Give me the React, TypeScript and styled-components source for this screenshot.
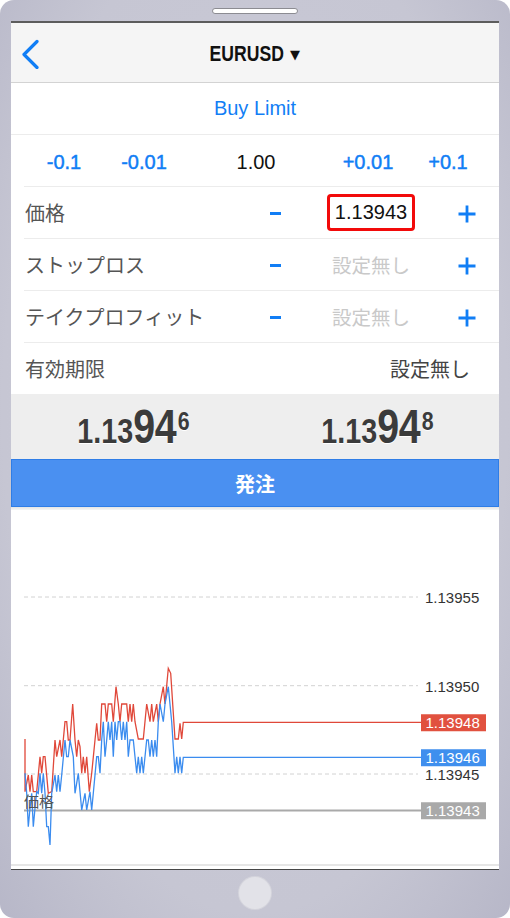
import styled, { createGlobalStyle } from "styled-components";

const BLUE = "#117ef5";
const SANS = `"Liberation Sans", "Noto Sans CJK JP", sans-serif`;

const GlobalStyle = createGlobalStyle`
  body {
    margin: 0;
    background: #ffffff;
    font-family: ${SANS};
  }
`;

// chart traces, read off the reference at 3x (x, y)
const redTrace: [number, number][] = [
  [75, 537], [75, 695], [85, 645], [90, 695], [95, 645], [100, 695], [110, 695],
  [120, 590], [125, 640], [130, 590], [135, 590], [145, 700], [155, 695],
  [165, 540], [170, 590], [180, 540], [185, 590], [195, 485], [200, 485],
  [205, 540], [210, 540], [218, 432], [225, 540], [230, 590], [235, 540],
  [240, 560], [245, 640], [250, 590], [255, 640], [260, 590], [268, 695],
  [275, 640], [285, 540], [290, 490], [295, 540], [300, 540], [305, 432],
  [315, 432], [320, 485], [325, 432], [335, 432], [340, 485], [348, 380],
  [355, 432], [360, 485], [365, 432], [380, 432], [385, 485], [390, 432],
  [395, 485], [400, 432], [405, 485], [415, 537], [430, 537], [440, 432],
  [450, 485], [455, 432], [460, 485], [470, 432], [475, 485], [480, 432],
  [490, 380], [495, 432], [505, 325], [512, 340], [525, 537], [535, 537],
  [540, 490], [545, 537], [550, 487], [1263, 487]
];

const blueTrace: [number, number][] = [
  [75, 640], [80, 700], [85, 800], [90, 745], [95, 700], [100, 800], [105, 745],
  [110, 695], [115, 700], [120, 640], [125, 700], [130, 640], [135, 700],
  [140, 800], [145, 800], [150, 855], [155, 700], [165, 645], [170, 695],
  [175, 645], [180, 695], [185, 645], [195, 540], [200, 590], [205, 590],
  [210, 540], [220, 590], [225, 700], [235, 640], [245, 750], [255, 700],
  [260, 750], [270, 695], [275, 750], [280, 700], [290, 590], [295, 590],
  [300, 640], [305, 540], [310, 485], [315, 590], [320, 540], [325, 485],
  [330, 540], [335, 485], [340, 590], [345, 485], [350, 540], [355, 485],
  [360, 485], [365, 540], [370, 485], [375, 540], [380, 485], [385, 590],
  [390, 540], [400, 540], [405, 590], [410, 640], [415, 590], [420, 640],
  [425, 590], [430, 640], [435, 590], [440, 540], [445, 540], [450, 590],
  [455, 540], [460, 590], [465, 540], [470, 590], [475, 485], [480, 432],
  [490, 485], [495, 432], [505, 380], [515, 485], [525, 640], [530, 590],
  [535, 640], [540, 590], [545, 640], [550, 592], [1263, 592]
];

const toPoints = (pts: [number, number][]) =>
  pts.map(([x, y]) => `${(x / 3 - 11).toFixed(1)},${(y / 3 + 50).toFixed(1)}`).join(" ");

const gridLevels = [
  { y: 87, label: "1.13955" },
  { y: 175.7, label: "1.13950" },
  { y: 264, label: "1.13945" }
];

const markers = [
  { y: 212.5, label: "1.13948", color: "#e1513f" },
  { y: 247.5, label: "1.13946", color: "#3f8fee" },
  { y: 300.5, label: "1.13943", color: "#a9a9a9" }
];

type Field = { label: string; value?: string };

const fields: Field[] = [
  { label: "価格", value: "1.13943" },
  { label: "ストップロス" },
  { label: "テイクプロフィット" }
];

const Quote = ({ head, big, tail }: { head: string; big: string; tail: string }) => (
  <QuoteCell>
    <QuoteText>
      <QuoteHead>{head}</QuoteHead>
      <QuoteBig>{big}</QuoteBig>
      <QuoteSup>{tail}</QuoteSup>
    </QuoteText>
  </QuoteCell>
);

export default function App() {
  return (
    <>
      <GlobalStyle />
      <Phone>
        <TopBezel>
          <Speaker />
        </TopBezel>
        <Screen>
          <NavBar>
            <BackButton>
              <svg width="20" height="30" viewBox="0 0 20 30">
                <polyline
                  points="16,2.5 3,15.5 16,28.5"
                  fill="none"
                  stroke={BLUE}
                  strokeWidth="3.2"
                  strokeLinecap="round"
                  strokeLinejoin="round"
                />
              </svg>
            </BackButton>
            <Title>
              <Symbol>EURUSD</Symbol>
              <Caret>▼</Caret>
            </Title>
            <span />
          </NavBar>

          <ModeRow>Buy Limit</ModeRow>

          <StepRow>
            <Step>-0.1</Step>
            <Step>-0.01</Step>
            <Step $plain>1.00</Step>
            <Step>+0.01</Step>
            <Step>+0.1</Step>
          </StepRow>

          {fields.map((f) => (
            <FieldRow key={f.label}>
              <FieldLabel>{f.label}</FieldLabel>
              <Minus />
              <ValueBox $active={!!f.value}>{f.value ?? "設定無し"}</ValueBox>
              <PlusIcon viewBox="0 0 20 20">
                <path d="M10 1.5V18.5M1.5 10H18.5" stroke={BLUE} strokeWidth="2.8" />
              </PlusIcon>
            </FieldRow>
          ))}

          <ExpiryRow>
            <FieldLabel>有効期限</FieldLabel>
            <ExpiryValue>設定無し</ExpiryValue>
          </ExpiryRow>

          <Quotes>
            <Quote head="1.13" big="94" tail="6" />
            <Quote head="1.13" big="94" tail="8" />
          </Quotes>

          <OrderButton>発注</OrderButton>
          <Divider />

          <Chart>
            <ChartSvg viewBox="0 0 488 354">
              {gridLevels.map((g) => (
                <line
                  key={g.label}
                  x1="13"
                  x2="407"
                  y1={g.y}
                  y2={g.y}
                  stroke="#d2d2d2"
                  strokeWidth="1"
                  strokeDasharray="4 3"
                />
              ))}
              <line x1="13" x2="410" y1="300.5" y2="300.5" stroke="#a9a9a9" strokeWidth="2" />
              <polyline points={toPoints(redTrace)} fill="none" stroke="#e0483a" strokeWidth="1.3" />
              <polyline points={toPoints(blueTrace)} fill="none" stroke="#3b8cef" strokeWidth="1.3" />
            </ChartSvg>
            {gridLevels.map((g) => (
              <AxisLabel key={g.label} style={{ top: g.y }}>
                {g.label}
              </AxisLabel>
            ))}
            {markers.map((m) => (
              <Marker key={m.label} $color={m.color} style={{ top: m.y }}>
                {m.label}
              </Marker>
            ))}
            <ChartTag>価格</ChartTag>
          </Chart>
          <ChartFoot />
        </Screen>
        <BottomBezel>
          <HomeButton />
        </BottomBezel>
      </Phone>
    </>
  );
}

const Phone = styled.div`
  width: 510px;
  height: 918px;
  box-sizing: border-box;
  padding: 0 11px;
  display: flex;
  flex-direction: column;
  border-radius: 14px;
  background: radial-gradient(ellipse at 50% 45%, #cbcbd8 0%, #c6c6d3 70%, #b7b7c8 100%);
  overflow: hidden;
`;

const TopBezel = styled.div`
  height: 21px;
  display: flex;
  align-items: center;
  justify-content: center;
`;

const Speaker = styled.div`
  width: 86px;
  height: 6px;
  border-radius: 4px;
  background: #ffffff;
  border: 1px solid #8c8c92;
  box-sizing: border-box;
  margin-top: 1px;
`;

const Screen = styled.div`
  height: 846px;
  display: flex;
  flex-direction: column;
  background: #ffffff;
  border-top: 2px solid #5c5c5c;
  border-bottom: 1px solid #474747;
  overflow: hidden;
`;

const NavBar = styled.div`
  height: 59px;
  flex-shrink: 0;
  display: grid;
  grid-template-columns: 60px 1fr 60px;
  align-items: center;
  background: #f5f5f5;
  border-bottom: 1px solid #d3d3d3;
`;

const BackButton = styled.div`
  padding-left: 10px;
  display: flex;
  align-items: center;
  padding-top: 3px;
`;

const Title = styled.div`
  display: flex;
  align-items: center;
  justify-content: center;
  color: #111111;
  padding-top: 3px;
`;

const Symbol = styled.span`
  display: inline-block;
  font-weight: 700;
  font-size: 22px;
  transform: scaleX(0.8);
  transform-origin: right center;
  margin-left: -19px;
`;

const Caret = styled.span`
  font-family: "DejaVu Sans", sans-serif;
  font-size: 13px;
  margin-left: 6px;
  padding-top: 1px;
`;

const ModeRow = styled.div`
  height: 52px;
  flex-shrink: 0;
  box-sizing: border-box;
  display: flex;
  align-items: center;
  justify-content: center;
  border-bottom: 1px solid #ececec;
  color: ${BLUE};
  font-size: 20px;
`;

const StepRow = styled.div`
  height: 52px;
  flex-shrink: 0;
  box-sizing: border-box;
  margin-left: 13px;
  padding: 3px 11px 0 0;
  display: grid;
  grid-template-columns: 80px 80px 1fr 80px 80px;
  align-items: center;
  border-bottom: 1px solid #ececec;
`;

const Step = styled.div<{ $plain?: boolean }>`
  text-align: center;
  font-size: 20px;
  color: ${(p) => (p.$plain ? "#111111" : BLUE)};
  -webkit-text-stroke: ${(p) => (p.$plain ? "0" : "0.45px")} ${BLUE};
`;

const FieldRow = styled.div`
  height: 52px;
  flex-shrink: 0;
  box-sizing: border-box;
  margin-left: 13px;
  padding: 0 12px 0 1px;
  display: grid;
  grid-template-columns: 1fr 40px 88px 40px;
  column-gap: 32px;
  align-items: center;
  border-bottom: 1px solid #ececec;
`;

const FieldLabel = styled.div`
  font-size: 20px;
  color: #555555;
  white-space: nowrap;
`;

const Minus = styled.div`
  justify-self: center;
  width: 11px;
  height: 3px;
  background: ${BLUE};
  margin-top: 1px;
`;

const ValueBox = styled.div<{ $active: boolean }>`
  height: 37px;
  box-sizing: border-box;
  display: flex;
  align-items: center;
  justify-content: center;
  border-radius: 4px;
  border: 3px solid ${(p) => (p.$active ? "#f20a0a" : "transparent")};
  color: ${(p) => (p.$active ? "#111111" : "#c9c9c9")};
  font-size: ${(p) => (p.$active ? "20px" : "19.5px")};
  white-space: nowrap;
`;

const PlusIcon = styled.svg`
  justify-self: center;
  width: 20px;
  height: 20px;
  margin-top: 3px;
`;

const ExpiryRow = styled.div`
  height: 51px;
  flex-shrink: 0;
  margin-left: 13px;
  padding: 0 29px 0 1px;
  display: flex;
  align-items: center;
  justify-content: space-between;
  box-sizing: border-box;
`;

const ExpiryValue = styled.div`
  font-size: 20px;
  color: #444444;
`;

const Quotes = styled.div`
  height: 65px;
  flex-shrink: 0;
  display: grid;
  grid-template-columns: 1fr 1fr;
  background: #eeeeee;
`;

const QuoteCell = styled.div`
  display: flex;
  align-items: center;
  justify-content: center;
`;

const QuoteText = styled.div`
  display: inline-block;
  transform: scaleX(0.82);
  font-weight: 700;
  color: #3b3b3b;
  line-height: 1;
  white-space: nowrap;
  text-shadow: 0 1px 0 #ffffff;
`;

const QuoteHead = styled.span`
  font-size: 35px;
`;

const QuoteBig = styled.span`
  font-size: 48px;
  letter-spacing: -0.5px;
`;

const QuoteSup = styled.span`
  font-size: 26px;
  vertical-align: 13px;
  margin-left: 2px;
`;

const OrderButton = styled.div`
  height: 48px;
  flex-shrink: 0;
  box-sizing: border-box;
  display: flex;
  align-items: center;
  justify-content: center;
  background: #4a90f1;
  border: 1px solid #2f7de6;
  color: #ffffff;
  font-size: 20px;
  font-weight: 700;
`;

const Divider = styled.div`
  height: 3px;
  flex-shrink: 0;
  background: linear-gradient(#e4e4e4, #f6f6f6);
`;

const Chart = styled.div`
  position: relative;
  height: 354px;
  flex-shrink: 0;
`;

const ChartSvg = styled.svg`
  display: block;
  width: 488px;
  height: 354px;
`;

const AxisLabel = styled.span`
  position: absolute;
  left: 414px;
  transform: translateY(-50%);
  font-size: 15px;
  line-height: 1;
  color: #333333;
`;

const Marker = styled.span<{ $color: string }>`
  position: absolute;
  left: 410px;
  width: 65px;
  height: 17.5px;
  box-sizing: border-box;
  transform: translateY(-50%);
  display: flex;
  align-items: center;
  padding-left: 4.5px;
  background: ${(p) => p.$color};
  color: #ffffff;
  font-size: 15px;
  line-height: 1;
`;

const ChartTag = styled.span`
  position: absolute;
  left: 13px;
  top: 284px;
  font-size: 15px;
  line-height: 1;
  color: #555555;
`;

const ChartFoot = styled.div`
  height: 2px;
  flex-shrink: 0;
  background: #e6e6e6;
`;

const BottomBezel = styled.div`
  flex: 1;
  display: flex;
  align-items: center;
  justify-content: center;
`;

const HomeButton = styled.div`
  width: 32px;
  height: 32px;
  border-radius: 50%;
  background: #e2e2e8;
  box-shadow: 0 0 0 1px #d4d4dc;
  margin-top: -2px;
`;
